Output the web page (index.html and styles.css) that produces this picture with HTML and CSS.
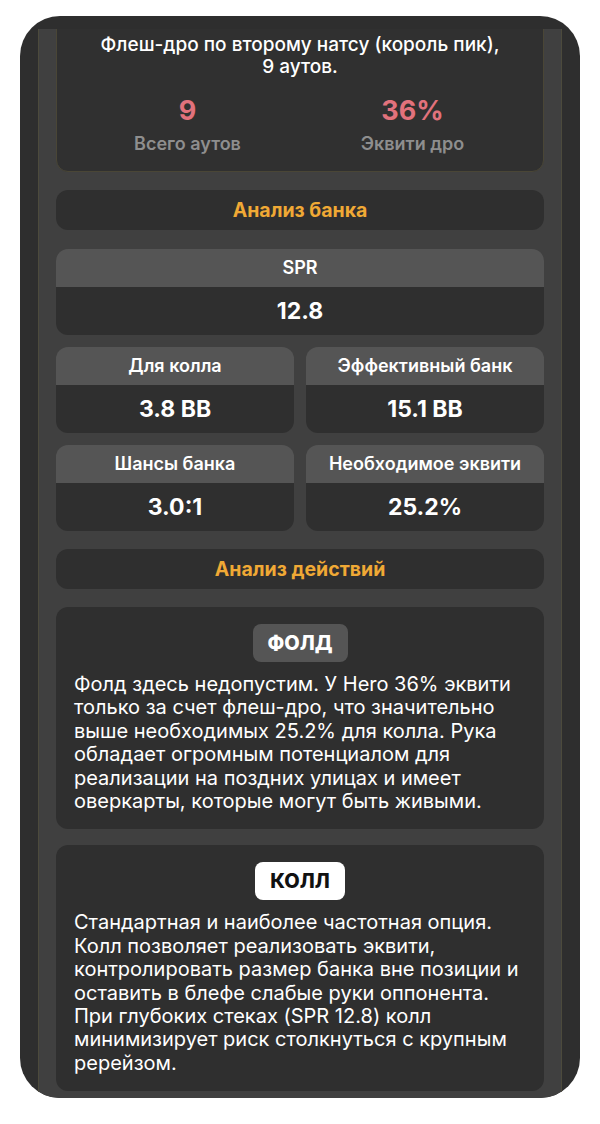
FILE: index.html
```html
<!DOCTYPE html>
<html lang="ru">
<head>
    <meta charset="UTF-8">
    <meta name="viewport" content="width=device-width, initial-scale=1.0">
    <title>Анализ раздачи</title>
    <link rel="stylesheet" href="styles.css">
</head>
<body>
    <div class="phone">
        <div class="viewport">
            <div class="panel">
                <!-- Draw summary -->
                <div class="draw-card">
                    <p class="draw-title">Флеш-дро по второму натсу (король пик), 9&nbsp;аутов.</p>
                    <div class="draw-stats">
                        <div class="draw-stat">
                            <div class="draw-num">9</div>
                            <div class="draw-label">Всего аутов</div>
                        </div>
                        <div class="draw-stat">
                            <div class="draw-num">36%</div>
                            <div class="draw-label">Эквити дро</div>
                        </div>
                    </div>
                </div>

                <div class="section-title">Анализ банка</div>

                <div class="stats">
                    <div class="stat">
                        <div class="stat-head">SPR</div>
                        <div class="stat-value">12.8</div>
                    </div>
                    <div class="stat-grid">
                        <div class="stat">
                            <div class="stat-head">Для колла</div>
                            <div class="stat-value">3.8 BB</div>
                        </div>
                        <div class="stat">
                            <div class="stat-head">Эффективный банк</div>
                            <div class="stat-value">15.1 BB</div>
                        </div>
                        <div class="stat">
                            <div class="stat-head">Шансы банка</div>
                            <div class="stat-value">3.0:1</div>
                        </div>
                        <div class="stat">
                            <div class="stat-head">Необходимое эквити</div>
                            <div class="stat-value">25.2%</div>
                        </div>
                    </div>
                </div>

                <div class="section-title">Анализ действий</div>

                <div class="actions">
                    <div class="action">
                        <span class="badge">ФОЛД</span>
                        <p>Фолд здесь недопустим. У Hero 36% эквити только за счет флеш-дро, что значительно выше необходимых 25.2% для колла. Рука обладает огромным потенциалом для реализации на поздних улицах и имеет оверкарты, которые могут быть живыми.</p>
                    </div>
                    <div class="action">
                        <span class="badge badge-best">КОЛЛ</span>
                        <p>Стандартная и наиболее частотная опция. Колл позволяет реализовать эквити, контролировать размер банка вне позиции и оставить в блефе слабые руки оппонента. При глубоких стеках (SPR 12.8) колл минимизирует риск столкнуться с крупным ререйзом.</p>
                    </div>
                </div>
            </div>
        </div>
    </div>
</body>
</html>
```

FILE: styles.css
```css
* {
    margin: 0;
    padding: 0;
    box-sizing: border-box;
}
body {
    font-family: 'Inter', 'Noto Sans', sans-serif;
    background: #ffffff;
    color: #ffffff;
}

/* Device frame */
.phone {
    margin: 16px 20px 0;
    height: 1082px;
    padding: 13px 18px 0;
    border-radius: 40px;
    background: #2e2e2e;
    overflow: hidden;
}
.viewport {
    height: 100%;
    overflow: hidden;
}
.panel {
    display: flex;
    flex-direction: column;
    gap: 18px;
    min-height: 1100px;
    margin-top: -14px;
    padding: 0 17px 40px;
    background: #404040;
    border-left: 1px solid #4c4a3c;
    border-right: 1px solid #4c4a3c;
}

/* Draw summary */
.draw-card {
    padding: 18px 18px 16px;
    background: #303030;
    border: 1px solid #4a4636;
    border-radius: 12px;
    text-align: center;
}
.draw-title {
    font-size: 19px;
    font-weight: 500;
    line-height: 22px;
    padding: 0 4px;
    margin-bottom: 16px;
}
.draw-stats {
    display: grid;
    grid-template-columns: 1fr 1fr;
}
.draw-num {
    font-size: 27px;
    font-weight: 700;
    line-height: 34px;
    color: #e2727c;
}
.draw-label {
    margin-top: 5px;
    font-size: 18px;
    font-weight: 600;
    line-height: 22px;
    color: #8e8e8e;
}

/* Section headers */
.section-title {
    padding: 9px 0;
    background: #2f2f2f;
    border-radius: 12px;
    text-align: center;
    font-size: 19.5px;
    font-weight: 700;
    line-height: 22px;
    color: #f0a935;
}

/* Pot stats */
.stats {
    display: flex;
    flex-direction: column;
    gap: 12px;
    margin-top: 1px;
}
.stat-grid {
    display: grid;
    grid-template-columns: 1fr 1fr;
    gap: 12px;
}
.stat {
    border-radius: 12px;
    overflow: hidden;
    text-align: center;
}
.stat-head {
    height: 38px;
    line-height: 38px;
    background: #555555;
    font-size: 18px;
    font-weight: 600;
}
.stat-value {
    height: 48px;
    line-height: 48px;
    background: #2f2f2f;
    font-size: 23px;
    font-weight: 700;
}

/* Action breakdown */
.actions {
    display: flex;
    flex-direction: column;
    gap: 16px;
}
.action {
    padding: 17px 18px 16px;
    background: #2f2f2f;
    border-radius: 12px;
    text-align: center;
}
.badge {
    display: inline-block;
    height: 38px;
    padding: 0 15px;
    line-height: 38px;
    border-radius: 8px;
    background: #555555;
    font-size: 20px;
    font-weight: 800;
}
.badge-best {
    background: #ffffff;
    color: #111111;
}
.action p {
    margin-top: 11px;
    text-align: left;
    font-size: 20px;
    line-height: 23.4px;
}
```
